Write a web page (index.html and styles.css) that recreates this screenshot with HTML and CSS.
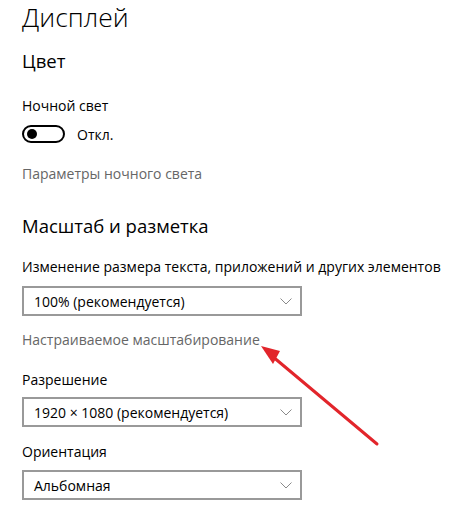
FILE: index.html
```html
<!DOCTYPE html>
<html lang="ru">
<head>
<meta charset="utf-8">
<link rel="stylesheet" href="styles.css">
</head>
<body>
<div class="page">
  <h1 class="title">Дисплей</h1>
  <h2 class="section section-color">Цвет</h2>
  <div class="label label-night">Ночной свет</div>
  <div class="toggle-row">
    <span class="toggle"><span class="knob"></span></span>
    <span class="toggle-text">Откл.</span>
  </div>
  <div class="link link-night">Параметры ночного света</div>
  <h2 class="section section-scale">Масштаб и разметка</h2>
  <div class="label label-size">Изменение размера текста, приложений и других элементов</div>
  <div class="select select-size"><span class="select-text">100% (рекомендуется)</span><svg class="chev" width="12" height="7" viewBox="0 0 12 7"><path d="M0.5 0.5 L6 6 L11.5 0.5" fill="none" stroke="#8a8a8a" stroke-width="1"/></svg></div>
  <div class="link link-custom">Настраиваемое масштабирование</div>
  <div class="label label-res">Разрешение</div>
  <div class="select select-res"><span class="select-text">1920 × 1080 (рекомендуется)</span><svg class="chev" width="12" height="7" viewBox="0 0 12 7"><path d="M0.5 0.5 L6 6 L11.5 0.5" fill="none" stroke="#8a8a8a" stroke-width="1"/></svg></div>
  <div class="label label-or">Ориентация</div>
  <div class="select select-or"><span class="select-text">Альбомная</span><svg class="chev" width="12" height="7" viewBox="0 0 12 7"><path d="M0.5 0.5 L6 6 L11.5 0.5" fill="none" stroke="#8a8a8a" stroke-width="1"/></svg></div>
</div>
<svg class="arrow" width="453" height="506" viewBox="0 0 453 506">
  <line x1="377" y1="444" x2="272" y2="356" stroke="#e2252b" stroke-width="3" stroke-linecap="round"/>
  <polygon points="261,346 280,351 273,364" fill="#e2252b"/>
</svg>
</body>
</html>
```
FILE: styles.css
```css
html, body {
  margin: 0;
  padding: 0;
  background: #fff;
}
body {
  font-family: "Open Sans", "Noto Sans", sans-serif;
  color: #000;
  width: 453px;
  height: 506px;
  overflow: hidden;
  position: relative;
}
.page {
  padding-left: 22px;
}
.title {
  margin: 0;
  font-weight: 300;
  font-size: 26.5px;
  line-height: 34px;
  height: 34px;
}
.section {
  margin: 0;
  font-weight: 400;
  font-size: 18.5px;
  line-height: 26px;
}
.section-color {
  margin-top: 14px;
}
.section-scale {
  margin-top: 29px;
}
.label,
.link {
  font-size: 14px;
  line-height: 20px;
  white-space: nowrap;
}
.label {
  color: #000;
}
.link {
  color: #666;
}
.label-night {
  margin-top: 22px;
}
.toggle-row {
  display: flex;
  align-items: flex-start;
  margin-top: 9px;
}
.toggle {
  box-sizing: border-box;
  width: 43px;
  height: 18px;
  border: 2px solid #000;
  border-radius: 9px;
  display: flex;
  align-items: center;
  padding-left: 3px;
}
.knob {
  width: 10px;
  height: 10px;
  border-radius: 50%;
  background: #000;
}
.toggle-text {
  margin-left: 12px;
  font-size: 14px;
  line-height: 20px;
}
.link-night {
  margin-top: 19px;
}
.label-size {
  margin-top: 18px;
}
.select {
  box-sizing: border-box;
  width: 280px;
  height: 30px;
  border: 2px solid #999;
  display: flex;
  align-items: center;
  justify-content: space-between;
  padding: 0 8px 0 10px;
  font-size: 14px;
}
.select-size {
  margin-top: 9px;
}
.link-custom {
  margin-top: 14px;
}
.label-res {
  margin-top: 20px;
}
.select-res {
  margin-top: 7px;
}
.label-or {
  margin-top: 15px;
}
.select-or {
  margin-top: 8px;
}
.chev {
  display: block;
}
.arrow {
  position: absolute;
  left: 0;
  top: 0;
  pointer-events: none;
}
```
